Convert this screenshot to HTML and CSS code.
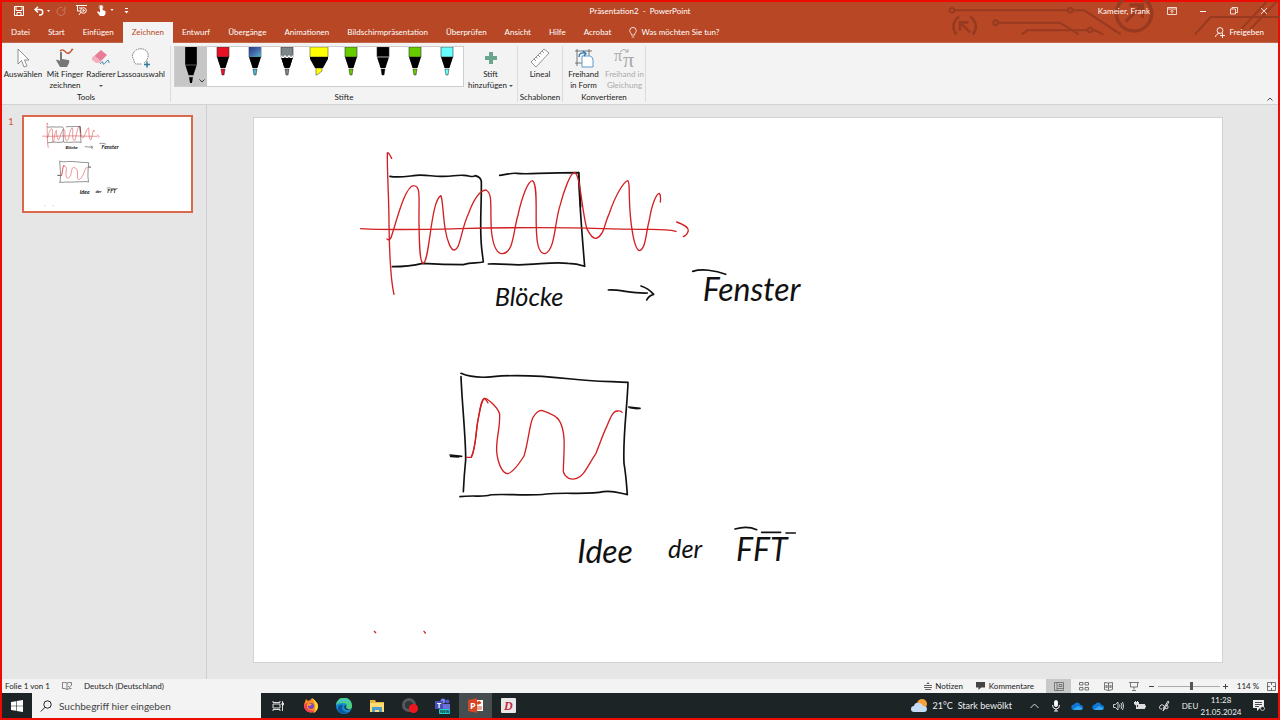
FILE: index.html
```html
<!DOCTYPE html>
<html lang="de">
<head>
    <meta charset="UTF-8">
    <meta name="viewport" content="width=device-width, initial-scale=1.0">
    <title>Präsentation2 - PowerPoint</title>
    <link rel="stylesheet" href="styles.css">
</head>
<body>
    <!-- shared drawings -->
    <svg class="defs" aria-hidden="true">
        <symbol id="pen" viewBox="0 0 14 29">
            <path d="M1 0h12v10H1z" fill="currentColor" stroke="#333" stroke-width=".6"/>
            <path d="M1 10h12L9.500 21h-5z" fill="#000"/>
            <path d="M5 22h4L8 28H6z" fill="currentColor" stroke="#222" stroke-width=".5"/>
        </symbol>
        <symbol id="cloud" viewBox="0 0 12 8">
            <path d="M3 8a2.700 2.700 0 0 1 0-5.400A3.500 3.500 0 0 1 9.500 3 2.500 2.500 0 0 1 9.500 8z" fill="#0f78d4"/>
            <path d="M2 7.500 7 4l4.500 2.500A2.300 2.300 0 0 1 9.500 8H3z" fill="#35a7f0"/>
        </symbol>
    </svg>

    <div class="window">
        <header>
            <svg class="circuit" viewBox="0 0 1020 120" fill="none" stroke="#983a20" stroke-width="6" aria-hidden="true">
                <circle cx="36" cy="31" r="7"/><circle cx="391" cy="31" r="7"/><path d="M43 31H384M398 31H433L542 103"/>
                <circle cx="167" cy="68" r="7"/><path d="M174 68H360L416 103M245 103L262 91H442M457 91H465L490 103"/><circle cx="450" cy="90" r="7"/>
                <path d="M50 103A34 34 0 0 1 58 50M90 50A34 34 0 0 1 98 103M90 97 60 67M60 92V67H85" stroke-width="8"/>
                <circle cx="582" cy="40" r="53" stroke-width="10"/><path d="M557 65 607 15M568 15H607V53" stroke-width="10"/>
                <path d="M765 103 812 51H1020M903 88 980 5M930 88 1010 5"/>
            </svg>
            <div class="titlebar">
                <div class="quick">
                    <button aria-label="Speichern"><svg width="10" height="10" viewBox="0 0 10 10" fill="none" stroke="#fff"><path d="M.5.5h9v9h-9zM2 .5v4h6v-4M3 9.500v-3h4v3"/></svg></button>
                    <button aria-label="Rückgängig"><svg width="16" height="10" viewBox="0 0 16 10" fill="none" stroke="#fff" stroke-width="1.400"><path d="M4 .8 1 3.500l3 3M1 3.500h5a2.700 2.700 0 0 1 0 5.500H5"/><path d="m13 4 1.500 2L16 4z" fill="#fff" stroke="none"/></svg></button>
                    <button aria-label="Wiederholen"><svg width="10" height="10" viewBox="0 0 10 10" fill="none" stroke="#d07a61"><path d="M6 1.500A4 4 0 1 0 9 5M6 4h3V.5"/></svg></button>
                    <button aria-label="Bildschirmpräsentation starten"><svg width="11" height="11" viewBox="0 0 11 11" fill="none" stroke="#fff"><path d="M0 .5h11M1.500 1v5h3M3 10l2-3M3 3h3"/><circle cx="7.500" cy="5.500" r="2.800"/><path d="M7 4.500v2l1.500-1z"/></svg></button>
                    <button aria-label="Touchmodus"><svg width="17" height="11" viewBox="0 0 17 11"><path d="M3 1a1.500 1.500 0 0 1 2.500 1v3l3 1v3L7 11H3L0 7l1-.8L3 7.500z" fill="#fff"/><circle cx="4" cy="2" r="2" fill="none" stroke="#fff" stroke-width=".6"/><path d="m13.500 4 1.500 2 1.500-2z" fill="#fff"/></svg></button>
                    <button aria-label="Schnellzugriff anpassen"><svg width="5" height="6" viewBox="0 0 5 6" fill="#fff"><path d="M1 0h3v1H1zM.5 3h4l-2 2.500z"/></svg></button>
                </div>
                <div class="doc-title">Präsentation2 &nbsp;- &nbsp;PowerPoint</div>
                <div class="account">
                    <span class="user">Kameier, Frank</span>
                    <button aria-label="Menübandoptionen"><svg width="10" height="8" viewBox="0 0 10 8" fill="none" stroke="#fff" stroke-width=".8"><path d="M.5.5h9v7h-9zM.5 2h9M5 6.500V3.500M3.500 4.800 5 3.300l1.500 1.500"/></svg></button>
                    <button aria-label="Minimieren"><svg width="8" height="8" viewBox="0 0 8 8" stroke="#fff"><path d="M1 4.500h6"/></svg></button>
                    <button aria-label="Verkleinern"><svg width="8" height="8" viewBox="0 0 8 8" fill="none" stroke="#fff" stroke-width=".8"><path d="M.5 2h5v5h-5zM2 2V.5h5.500v5H6"/></svg></button>
                    <button aria-label="Schließen"><svg width="8" height="8" viewBox="0 0 8 8" stroke="#fff" stroke-width=".8"><path d="m1 1 6 6M7 1 1 7"/></svg></button>
                </div>
            </div>
            <nav>
                <a href="#">Datei</a>
                <a href="#">Start</a>
                <a href="#">Einfügen</a>
                <a href="#" class="active">Zeichnen</a>
                <a href="#">Entwurf</a>
                <a href="#">Übergänge</a>
                <a href="#">Animationen</a>
                <a href="#">Bildschirmpräsentation</a>
                <a href="#">Überprüfen</a>
                <a href="#">Ansicht</a>
                <a href="#">Hilfe</a>
                <a href="#">Acrobat</a>
                <a href="#" class="tell"><svg width="8" height="11" viewBox="0 0 8 11" fill="none" stroke="#fff" stroke-width=".8"><path d="M2.500 8C2.500 6 .7 5.500.7 3.700a3.300 3.300 0 0 1 6.600 0C7.300 5.500 5.500 6 5.500 8zM2.700 10h2.600"/></svg>Was möchten Sie tun?</a>
                <a href="#" class="share"><svg width="10" height="11" viewBox="0 0 10 11" fill="none" stroke="#fff" stroke-width=".9"><circle cx="5" cy="3.500" r="2.900"/><path d="M.5 10C1 7.500 2.500 6.500 4.500 6.500M5 8.500h5M7.500 6v5"/></svg>Freigeben</a>
            </nav>
        </header>

        <div class="ribbon">
            <section class="group tools">
                <div class="tools-row">
                    <button class="tool select"><svg width="20" height="20" viewBox="0 0 20 20" fill="#fff" stroke="#777" stroke-width=".8"><path d="M5 1v15l3.500-3.500L11 19l3-1-2.500-6H16z"/></svg><span>Auswählen</span></button>
                    <button class="tool finger"><svg width="20" height="20" viewBox="0 0 20 20"><path d="M5 3c5-4 5 4 9 2s2-5 4-3" fill="none" stroke="#c8512f" stroke-width="1.500"/><path d="M5 4q2-1 2 1v6l6 1q2 0 1 3l-2 4H5l-4-7q1-1 4 1z" fill="#777"/></svg><span>Mit Finger<br>zeichnen</span></button>
                    <button class="tool eraser"><svg width="20" height="20" viewBox="0 0 20 20"><path d="m1 10 9-8 6 5-8 8z" fill="#e77e96"/><path d="m1 10 3-2 6 5-2 2H5l-4-3z" fill="#f3b0bf"/><path d="M9 16q3-4 3-1t3-1 3 1" fill="none" stroke="#4588ad"/></svg><span>Radierer<br><i class="arrow"></i></span></button>
                    <button class="tool lasso"><svg width="20" height="20" viewBox="0 0 20 20" fill="none"><path d="M10 16H5q-2-1-2-4Q0 8 3 4t9-3q6 2 5 8-1 4-4 6" stroke="#555" stroke-width=".8" stroke-dasharray="1.500 .8" fill="#fff"/><path d="M13 16.500h6M16 13.500v6" stroke="#337c99" stroke-width="1.500"/></svg><span>Lassoauswahl</span></button>
                </div>
                <h2>Tools</h2>
            </section>
            <section class="group pens">
                <div class="tools-row">
                    <div class="gallery">
                        <button class="pen chosen" aria-label="Stift: Schwarz, groß"><svg width="12" height="38" viewBox="0 0 12 38"><path d="M0 0h12v18L8.500 29h-5L0 18z"/><path d="M0 18.500h12M3 30h6" stroke="#999" stroke-width=".6"/><path d="M4 31h4l-1 6H5z"/></svg><svg width="6" height="4" viewBox="0 0 6 4" fill="none" stroke="#333"><path d="m.5.5 2.500 2.500L5.500.5"/></svg></button>
                        <button class="pen red" aria-label="Stift: Rot"><svg><use href="#pen"/></svg></button>
                        <button class="pen galaxy" aria-label="Stift: Galaxie"><svg viewBox="0 0 14 29"><defs><linearGradient id="night" x2="1" y2="1"><stop stop-color="#213e83"/><stop offset=".5" stop-color="#4566ad"/><stop offset="1" stop-color="#55b3c5"/></linearGradient></defs><use href="#pen"/><path d="M1 0h12v9.500H1z" fill="url(#night)"/></svg></button>
                        <button class="pen pencil" aria-label="Bleistift"><svg viewBox="0 0 14 29"><use href="#pen"/><path d="m1 8 2 2 2-2 2 2 2-2 2 2 2-2v3H1z" fill="#fff"/><path d="m1 10 2 2 2-2 2 2 2-2 2 2 2-2-3 10H4z"/></svg></button>
                        <button class="pen marker" aria-label="Textmarker: Gelb"><svg width="20" height="29" viewBox="0 0 20 29"><path d="M1 0h18v10H1zM7 21h6v3l-5 4H7z" fill="#ff0" stroke="#555" stroke-width=".6"/><path d="M1 10h18v2l-5 9H6l-5-9z"/></svg></button>
                        <button class="pen green" aria-label="Stift: Grün"><svg><use href="#pen"/></svg></button>
                        <button class="pen black" aria-label="Stift: Schwarz"><svg viewBox="0 0 14 29"><use href="#pen"/><path d="M1 10h12" stroke="#aaa"/></svg></button>
                        <button class="pen green" aria-label="Stift: Hellgrün"><svg><use href="#pen"/></svg></button>
                        <button class="pen cyan" aria-label="Stift: Türkis"><svg><use href="#pen"/></svg></button>
                    </div>
                    <button class="tool add"><svg width="20" height="20" viewBox="0 0 20 20"><path d="M8 4h4v4h4v4h-4v4H8v-4H4V8h4z" fill="#6ba58e"/></svg><span>Stift<br>hinzufügen <i class="arrow"></i></span></button>
                </div>
                <h2>Stifte</h2>
            </section>
            <section class="group stencils">
                <div class="tools-row">
                    <button class="tool"><svg width="20" height="20" viewBox="0 0 20 20" fill="#fff" stroke="#888" stroke-width=".9"><path d="M1 14 14 1l5 4L6 19zM4 11l2 2M6 9l1.500 1.500M8 7l2 2M10 5l1.500 1.500M12 3l2 2"/></svg><span>Lineal</span></button>
                </div>
                <h2>Schablonen</h2>
            </section>
            <section class="group convert">
                <div class="tools-row">
                    <button class="tool"><svg width="20" height="20" viewBox="0 0 20 20" fill="none"><path d="M3 1v17M15 1v8M1 3h17M1 15h8" stroke="#555" stroke-width=".8"/><path d="M8 8h8q3 1 3 4v7H8z" fill="#fff" stroke="#5c9bd0"/><path d="M5 9q0-5 6-4M9 3l3 2.500L10 8" stroke="#2f75b5" stroke-width="1.300"/></svg><span>Freihand<br>in Form</span></button>
                    <button class="tool" disabled><svg width="22" height="20" viewBox="0 0 22 20"><text x="0" y="13" font-size="16" class="pi">π</text><text x="9" y="19" font-size="22" class="pi">π</text><path d="M6 4q4-5 8 0M11 4h3V1" fill="none" stroke="#aaa"/></svg><span>Freihand in<br>Gleichung</span></button>
                </div>
                <h2>Konvertieren</h2>
            </section>
            <button class="collapse" aria-label="Menüband reduzieren"><svg width="6" height="4" viewBox="0 0 6 4" fill="none" stroke="#444"><path d="m.5 3.500 2.500-2.500 2.500 2.500"/></svg></button>
        </div>

        <main>
            <aside>
                <span class="slide-number">1</span>
                <div class="thumb"><svg viewBox="0 0 2904 1632" aria-hidden="true"><use href="#ink"/></svg></div>
            </aside>
            <div class="stage">
                <div class="slide">
                    <svg viewBox="0 0 2904 1632" role="img" aria-label="Folie 1">
                        <g id="ink">
                            <g class="strokes">
                                <!-- signal with two blocks -->
                                <g transform="translate(258 66)">
                                    <g class="dark">
                                        <path d="M150 109C175 114 200 109 228 106S280 110 305 109C335 110 350 104 372 106S398 113 406 107Q423 112 424 125C425 200 418 260 425 325L430 366C410 371 395 366 370 374C330 374 280 372 248 370C215 378 190 380 157 380"/>
                                        <path d="M479 106C500 104 515 98 530 100C560 104 600 98 716 98C717 160 724 260 734 379C715 372 700 370 684 370C650 366 620 370 565 373C520 378 500 370 445 372"/>
                                        <path d="M716 98 722 200"/>
                                    </g>
                                    <g class="signal">
                                        <path d="M155 55Q145 35 142 39C141 90 147 180 147 250C148 320 152 420 162 463"/>
                                        <path d="M62 266C130 270 240 269 360 266S620 260 785 266S960 263 1008 274"/>
                                        <path d="M1010 246Q1045 258 1045 272Q1042 285 1030 290"/>
                                        <path d="M141 297Q148 303 153 293C168 250 195 135 222 137C243 138 236 175 237 250S240 370 250 370C269 365 272 180 303 167C309 185 309 230 316 270C322 305 333 330 342 330C362 328 362 270 386 220C400 180 420 150 438 150C459 160 450 200 454 270C458 310 466 341 487 341C522 338 519 275 534 225C546 170 564 122 578 122C595 135 585 230 590 285C592 320 600 341 615 341C646 330 643 250 660 197C672 150 692 97 704 97C722 110 722 190 740 265C750 285 759 296 768 295C793 287 793 250 808 220C827 163 852 125 863 122C869 125 867 140 868 170C870 250 882 330 899 332C918 325 917 280 928 240C935 195 949 160 958 160Q963 165 961 186"/>
                                    </g>
                                </g>
                                <!-- arrow and bar -->
                                <g transform="translate(978 126)" class="dark">
                                    <path d="M85 390C120 388 155 401 202 399M183 378C196 382 212 393 221 403Q206 407 200 420"/>
                                    <path d="M338 334C365 326 405 330 437 343"/>
                                </g>
                                <!-- single window -->
                                <g transform="translate(528 726)">
                                    <g class="dark">
                                        <path d="M93 40C120 52 150 54 190 50C270 42 350 49 425 57C490 65 550 64 594 67C592 140 578 230 582 310C588 345 590 375 592 404C570 400 550 390 520 395C480 405 400 396 350 402C290 409 220 400 180 405C160 412 130 405 90 410"/>
                                        <path d="M93 50C96 130 108 240 107 300Q102 350 100 395"/>
                                        <path d="M60 285 95 289M62 289 86 291M596 141 630 145M600 143 622 146"/>
                                    </g>
                                    <g class="signal">
                                        <path d="M109 292H124C139 260 137 210 145 175C151 143 155 115 165 115C178 119 205 145 209 163C210 210 198 235 200 275C204 315 219 341 233 341C249 338 268 310 282 288C295 245 298 198 308 174C317 158 325 151 335 151C357 158 380 167 388 182C411 220 400 285 400 335C405 354 423 360 437 356C463 350 477 310 498 280C510 250 520 220 530 200C544 166 551 152 562 153Q574 152 576 157"/>
                                        <path d="M124 292C139 260 137 210 145 175C151 143 155 115 165 115L174 129"/>
                                    </g>
                                </g>
                                <path class="dark" d="M1443 1233Q1480 1222 1508 1235M1523 1243H1580M1596 1245H1624"/>
                                <path class="signal" d="M361 1540l4 4M510 1540l4 5"/>
                            </g>
                            <g class="handwriting">
                                <text class="medium" x="722" y="564">Blöcke</text>
                                <text class="large" x="1346" y="548">Fenster</text>
                                <text class="large" x="970" y="1334">Idee</text>
                                <text class="medium" x="1242" y="1320">der</text>
                                <text class="large" x="1446" y="1328">FFT</text>
                            </g>
                        </g>
                    </svg>
                </div>
            </div>
        </main>

        <div class="status">
            <span class="page-count">Folie 1 von 1</span>
            <svg width="10" height="8" viewBox="0 0 10 8" fill="none" stroke="#666" stroke-width=".8"><path d="M5 7.500V1Q3 0 .5.5v6Q3 6 5 7.500 6 6.500 9.500 6.500M5 1q2-1 4.500-.5V3M6 4l1.500 1.500L10 2"/></svg>
            <span class="language">Deutsch (Deutschland)</span>
            <div class="status-right">
                <button class="notes"><svg width="8" height="8" viewBox="0 0 8 8" stroke="#555" stroke-width=".9"><path d="M0 3.500h8M0 5.500h8M1 7.500h6"/><path d="m2.500 2 1.500-2 1.500 2z" fill="#555" stroke="none"/></svg>Notizen</button>
                <button class="comments"><svg width="10" height="8" viewBox="0 0 10 8" fill="#444"><path d="M0 0h9v5.500H5L2.500 8V5.500H0z"/></svg>Kommentare</button>
                <button class="view current" aria-label="Normal"><svg width="10" height="9" viewBox="0 0 10 9" fill="none" stroke="#666" stroke-width=".8"><path d="M.5.500h9v8h-9zM3 .500v8M5 2.500h3v2H5zM3 6.500h6"/></svg></button>
                <button class="view" aria-label="Foliensortierung"><svg width="10" height="9" viewBox="0 0 10 9" fill="none" stroke="#555" stroke-width=".8"><path d="M.5.5h3.500v2.500H.5zM6 .5h3.500v2.500H6zM.5 5.500h3.500v2.500H.5zM6 5.500h3.500v2.500H6z"/></svg></button>
                <button class="view" aria-label="Leseansicht"><svg width="9" height="9" viewBox="0 0 9 9" fill="none" stroke="#555" stroke-width=".8"><path d="M4.500 8.500V1L.5.5v7l4 1 4-1v-7l-4 .5M2 3v3M3 3v3M6 3v3M7 3v3"/></svg></button>
                <button class="view" aria-label="Bildschirmpräsentation"><svg width="10" height="9" viewBox="0 0 10 9" fill="none" stroke="#555" stroke-width=".8"><path d="M0 .5h10M1.500 1v4h7V1M5 5v2.500M3 8.500h4"/></svg></button>
                <button class="step" aria-label="Verkleinern"><svg width="6" height="6" viewBox="0 0 6 6" stroke="#444"><path d="M0 3.500h5"/></svg></button>
                <input type="range" aria-label="Zoom" min="0" max="100" value="54">
                <button class="step" aria-label="Vergrößern"><svg width="6" height="6" viewBox="0 0 6 6" stroke="#444"><path d="M0 3.500h5M2.500 1v5"/></svg></button>
                <button class="percent">114 %</button>
                <button class="fit" aria-label="An Fenster anpassen"><svg width="9" height="9" viewBox="0 0 9 9" fill="none" stroke="#555" stroke-width=".8"><path d="M.5.5h8v8h-8zM4.500 0v3M4.500 6v3M0 4.500h3M6 4.500h3"/></svg></button>
            </div>
        </div>

        <footer>
            <button class="start" aria-label="Start"><svg width="12" height="12" viewBox="0 0 12 12" fill="#fff"><path d="M0 2l5-.8v4.500H0zM5.600 1.100 12 0v5.700H5.600zM0 6.300h5v4.500L0 10zM5.600 6.300H12V12l-6.400-1z"/></svg></button>
            <label class="search"><svg width="12" height="12" viewBox="0 0 12 12" fill="none" stroke="#222"><circle cx="7.500" cy="4.500" r="3.700"/><path d="M5 7.300.8 11.500"/></svg><input type="text" placeholder="Suchbegriff hier eingeben" aria-label="Suche"></label>
            <div class="apps">
                <button aria-label="Aktive Anwendungen"><svg width="12" height="12" viewBox="0 0 12 12" fill="none" stroke="#ddd"><path d="M1 1v1.500h7V1M1 4h7v4H1zM1 11V9.500h7V11M10.500 1v10"/><path d="M10 3h1.500v2H10z" fill="#fff"/></svg></button>
                <button aria-label="Firefox"><svg width="16" height="16" viewBox="0 0 16 16"><path d="M2 4 3 1l2 2q3-1 4-3 2 1 3 4 3 0 3 4a7 7 0 1 1-13-4z" fill="#ff8b23"/><path d="M9 0q6 4 6 9a7 7 0 0 1-5 6q5-6-1-15z" fill="#ffd33a"/><path d="M1 9a7 7 0 0 0 12 3q-6 2-9-2-1-3 1-5-4 0-4 4z" fill="#f43d58"/><circle cx="8" cy="8" r="3" fill="#7748bf"/><path d="M4 6q2-1 5 0l-2 2q-2 0-3-2z" fill="#ffa32b"/></svg></button>
                <button aria-label="Edge"><svg width="16" height="16" viewBox="0 0 16 16"><circle cx="8" cy="8" r="8" fill="#168bd4"/><path d="M0 7A8 8 0 0 1 16 8q0 4-5 3-2-1 0-3 0-3-4-3-5 0-7 2z" fill="#4cd07b"/><path d="M0 7Q2 1 8 1t7 6q-2-4-7-4-5 0-8 4z" fill="#43c4db"/><path d="M7 7q-3 5 3 7 3 1 4-2-3 5-9 3-4-2-3-6 2-3 5-2z" fill="#0b559c"/><path d="M9 7q-2 3 2 5l4-1q-2 1-5-1-1-1 0-2z" fill="#182428"/></svg></button>
                <button aria-label="Explorer"><svg width="16" height="14" viewBox="0 0 16 14"><path d="M1 1h5l1 2h8v10H1z" fill="#eab340"/><path d="M1 4h14v9H1z" fill="#ffdc73"/><path d="M3 13V8h10v5h-3v-2H6v2z" fill="#4d9cc9"/></svg></button>
                <button aria-label="Aufnahme"><svg width="16" height="15" viewBox="0 0 16 15"><circle cx="7" cy="7" r="7" fill="#55595b"/><circle cx="7" cy="7" r="4" fill="#30373a"/><circle cx="11.500" cy="10.500" r="4.500" fill="#ef151d"/></svg></button>
                <button aria-label="Teams"><svg width="17" height="16" viewBox="0 0 17 16"><circle cx="9" cy="3" r="2.500" fill="#7a82ed"/><circle cx="13.500" cy="3.500" r="2" fill="#5059c9"/><path d="M6 6h10v7H6z" fill="#6970d9"/><path d="M1 3h8v8H1z" fill="#464eb8"/><text class="icon-letter" x="3" y="10" font-size="7" fill="#fff">T</text><rect x="5" y="11" width="11" height="5" rx="1" fill="#22ccd1"/><text class="icon-letter" x="6" y="15" font-size="4" fill="#133">NEW</text></svg></button>
                <button class="running" aria-label="PowerPoint"><svg width="16" height="15" viewBox="0 0 16 15"><path d="M7 2h8v11H7z" fill="#fff"/><path d="M9 6a2 2 0 0 1 4-1l-2 1zM9 9h5M9 11h5" fill="#d74926" stroke="#d74926"/><path d="m0 2 9-2v15l-9-2z" fill="#d24726"/><text class="icon-letter" x="2" y="11" font-size="9" fill="#fff">P</text></svg></button>
                <button aria-label="D"><svg width="15" height="15" viewBox="0 0 15 15"><rect width="15" height="15" rx="1" fill="#e8e8e8"/><text class="icon-letter serif" x="3" y="12" font-size="12" fill="#c52b40">D</text></svg></button>
            </div>
            <div class="tray">
                <button class="weather"><svg width="17" height="14" viewBox="0 0 17 14"><circle cx="11" cy="5" r="5" fill="#f5a135"/><path d="M3 13a3 3 0 0 1 0-6q1-4 5-3 3 0 4 3 4 0 4 3t-3 3z" fill="#c6dbf5"/></svg><span>21°C</span><span>Stark bewölkt</span></button>
                <button aria-label="Ausgeblendete Symbole"><svg width="9" height="6" viewBox="0 0 9 6" fill="none" stroke="#ddd"><path d="m.5 5 4-4 4 4"/></svg></button>
                <button aria-label="Mikrofon"><svg width="8" height="12" viewBox="0 0 8 12" fill="none" stroke="#eee"><rect x="2.500" y=".5" width="3" height="6" rx="1.500" fill="#fff"/><path d="M.5 5q0 4 3.500 4t3.500-4M4 9v2M2 11h4"/></svg></button>
                <button aria-label="OneDrive"><svg width="12" height="8"><use href="#cloud"/></svg></button>
                <button aria-label="OneDrive Firma"><svg width="12" height="8"><use href="#cloud"/></svg></button>
                <button aria-label="Lautstärke"><svg width="11" height="10" viewBox="0 0 11 10" fill="none" stroke="#ddd" stroke-width=".9"><path d="M.5 3.500h2L5 1v8L2.500 6.500h-2zM6.500 3.500q1 1.500 0 3M8 2q2 3 0 6M9.500 1q2.500 4 0 8"/></svg></button>
                <button aria-label="Akku"><svg width="12" height="10" viewBox="0 0 12 10"><path d="M4 3h7v5H2V6h2zM11 4.500h1v2h-1zM0 1h1V0h1v1h1V0h1v1h1v2L3 4.500v2H2v-2L0 3z" fill="#ddd"/></svg></button>
                <button class="ink-button" aria-label="Windows Ink"><svg width="11" height="12" viewBox="0 0 11 12" fill="none" stroke="#ddd"><path d="M3 9q-4 0-2-3 1-2 3-1t1 4l-1 2 6-9-1-1-5 8M5 8q4 2 4-1t-3-1"/></svg></button>
                <button class="lang">DEU</button>
                <button class="clock"><time datetime="2024-05-21T11:28">11:28<br>21.05.2024</time></button>
                <button class="notify" aria-label="Benachrichtigungen"><svg width="12" height="11" viewBox="0 0 12 11"><path d="M0 0h11v8H7l-3 3V8H0z" fill="#eee"/><path d="M2 2.500h7M2 4.500h7M2 6.500h4" stroke="#1c2426" stroke-width=".8"/><circle cx="9.500" cy="8.500" r="2" fill="#1c2426" stroke="#eee" stroke-width=".7"/></svg></button>
            </div>
        </footer>
    </div>
</body>
</html>
```

FILE: styles.css
```css
* {
    box-sizing: border-box;
}
body {
    margin: 0;
    font-family: Lato, "Open Sans", sans-serif;
    font-size: 8px;
    color: #222;
}
button, input {
    font: inherit;
    color: inherit;
    background: none;
    border: none;
    padding: 0;
    margin: 0;
}
a {
    color: inherit;
    text-decoration: none;
}
svg {
    display: block;
    flex-shrink: 0;
}
.defs {
    position: absolute;
    width: 0;
    height: 0;
}
.window {
    display: flex;
    flex-direction: column;
    min-height: 100vh;
    border: 2px solid #ee0b04;
    background-color: #e6e6e6;
}

/* title bar and tabs */
header {
    position: relative;
    background-color: #b74725;
    color: #fff;
}
.circuit {
    position: absolute;
    top: -2px;
    right: -2px;
    width: 340px;
    height: 40px;
}
.titlebar {
    position: relative;
    display: grid;
    grid-template-columns: 1fr auto 1fr;
    align-items: center;
    height: 20px;
    padding-bottom: 3px;
}
.quick {
    display: flex;
    align-items: center;
    gap: 10px;
    padding-left: 12px;
}
.quick button:nth-child(3) {
    margin-left: -4px;
}
.account {
    display: flex;
    justify-content: flex-end;
    align-items: center;
}
.account button {
    display: flex;
    justify-content: center;
    width: 31px;
}
.account .user {
    margin-right: 6px;
}
.account button:last-child {
    width: 29px;
}
nav {
    position: relative;
    display: flex;
    height: 21px;
    line-height: 20px;
    border-bottom: 1px solid #c3674b;
}
nav a {
    padding: 0 9px;
    white-space: nowrap;
}
nav .active {
    height: 21px;
    background-color: #f3f3f3;
    color: #b74725;
}
nav .tell, nav .share {
    display: flex;
    align-items: center;
    gap: 4px;
}
nav .share {
    margin-left: auto;
    padding-right: 14px;
}

/* ribbon */
.ribbon {
    display: flex;
    height: 62px;
    padding: 3px 0 2px;
    background-color: #f3f3f3;
    border-bottom: 1px solid #d2d2d2;
}
.group {
    display: flex;
    flex-direction: column;
    justify-content: space-between;
    border-right: 1px solid #dcdcdc;
}
.group h2 {
    margin: 0;
    font-size: 8px;
    font-weight: normal;
    line-height: 10px;
    text-align: center;
}
.tools-row {
    display: flex;
    align-items: flex-start;
}
.tool {
    display: flex;
    flex-direction: column;
    align-items: center;
    gap: 1px;
    flex: 1;
    padding-top: 2px;
    line-height: 11px;
    white-space: nowrap;
}
.tool:disabled {
    color: #aaa;
}
.tools {
    width: 169px;
}
.tools .tool {
    flex: none;
    width: 42px;
}
.tools .eraser {
    width: 30px;
}
.tools .lasso {
    width: 50px;
}
.pens {
    width: 347px;
}
.stencils {
    width: 45px;
}
.convert {
    width: 83px;
}
.arrow {
    display: inline-block;
    vertical-align: middle;
    border: 2px solid transparent;
    border-top-color: #555;
    border-bottom: 0;
}
.gallery {
    display: flex;
    width: 290px;
    height: 41px;
    margin-left: 3px;
    border: 1px solid #cdcdcd;
    background-color: #fff;
}
.pen {
    display: flex;
    justify-content: center;
    flex: 1;
    height: 39px;
}
.pen svg {
    width: 14px;
    height: 29px;
}
.pen.chosen {
    position: relative;
    background-color: #c6c6c6;
}
.pen.chosen svg {
    width: 12px;
    height: 37px;
}
.pen.chosen svg + svg {
    position: absolute;
    right: 2px;
    bottom: 3px;
    width: 6px;
    height: 4px;
}
.pen.marker svg {
    width: 20px;
}
.red { color: #e81224; }
.galaxy { color: #4fb3cf; }
.pencil { color: #7c8587; }
.green { color: #66cc00; }
.black { color: #000; }
.cyan { color: #66ffff; }
.pi {
    font-family: "Liberation Serif", serif;
    fill: #aaa;
}
.collapse {
    margin-left: auto;
    align-self: flex-end;
    padding: 0 5px 1px;
}

/* slides */
main {
    flex: 1;
    display: flex;
}
aside {
    display: flex;
    align-items: flex-start;
    gap: 8px;
    width: 205px;
    padding: 10px 13px 0 6px;
    border-right: 1px solid #cfcfcf;
}
.slide-number {
    font-size: 10px;
    line-height: 12px;
    color: #d2593a;
}
.thumb {
    flex: 1;
    background-color: #fff;
    border: 2px solid #d9694a;
    --line: 8;
    --weight: 700;
}
.stage {
    flex: 1;
    padding: 12px 55px 16px 46px;
}
.slide {
    background-color: #fff;
    border: 1px solid #d2d2d2;
}
.slide svg, .thumb svg {
    width: 100%;
    aspect-ratio: 2904 / 1632;
}
.strokes {
    fill: none;
    stroke-width: var(--line, 5);
    stroke-linecap: round;
    stroke-linejoin: round;
}
.strokes .dark {
    stroke: #111;
}
.strokes .signal {
    stroke: #d21f22;
    stroke-width: var(--line, 4);
}
.handwriting {
    font-family: Lato, sans-serif;
    font-style: italic;
    font-weight: var(--weight, 400);
    fill: #111;
}
.handwriting .medium {
    font-size: 76px;
}
.handwriting .large {
    font-size: 96px;
}

/* status bar */
.status {
    display: flex;
    align-items: center;
    height: 14px;
    padding-left: 3px;
    background-color: #f3f3f3;
    white-space: nowrap;
}
.page-count {
    margin-right: 12px;
}
.language {
    margin-left: 12px;
}
.status-right {
    display: flex;
    align-items: center;
    height: 14px;
    margin-left: auto;
}
.status-right button {
    display: flex;
    align-items: center;
    justify-content: center;
    gap: 3px;
    height: 14px;
}
.status-right .notes {
    margin-right: 13px;
}
.status-right .comments {
    margin-right: 12px;
}
.status-right .view {
    width: 25px;
}
.status-right .current {
    background-color: #c9c9c9;
}
.status-right .step {
    width: 12px;
}
.status-right .percent {
    width: 32px;
}
.status-right .fit {
    width: 14px;
}
input[type="range"] {
    appearance: none;
    width: 62px;
    height: 1px;
    background-color: #aaa;
}
input[type="range"]::-webkit-slider-thumb {
    appearance: none;
    width: 3px;
    height: 8px;
    background-color: #555;
}

/* task bar */
footer {
    display: flex;
    height: 25px;
    background-color: #1c2426;
    color: #eee;
    font-size: 9px;
}
footer button {
    display: flex;
    align-items: center;
    justify-content: center;
}
.start {
    width: 30px;
}
.search {
    display: flex;
    align-items: center;
    gap: 7px;
    width: 229px;
    padding-left: 8px;
    background-color: #f3f3f3;
    color: #333;
    font-size: 10px;
}
.search input {
    flex: 1;
    height: 25px;
    outline: none;
}
.search input::placeholder {
    color: #444;
}
.apps {
    display: flex;
}
.apps button {
    width: 33px;
}
.apps .running {
    background-color: #454d4f;
}
.icon-letter {
    font-family: "Open Sans", sans-serif;
    font-weight: bold;
}
.icon-letter.serif {
    font-family: "Liberation Serif", serif;
    font-style: italic;
}
.tray {
    display: flex;
    margin-left: auto;
}
.tray button {
    width: 21px;
}
.tray .weather {
    gap: 5px;
    width: auto;
    margin-right: 12px;
    white-space: nowrap;
}
.tray .ink-button {
    width: 28px;
}
.tray .lang {
    width: 24px;
    font-size: 8px;
}
.tray .clock {
    width: 38px;
    font-size: 8px;
    line-height: 12px;
}
.tray .notify {
    width: 38px;
}
```
